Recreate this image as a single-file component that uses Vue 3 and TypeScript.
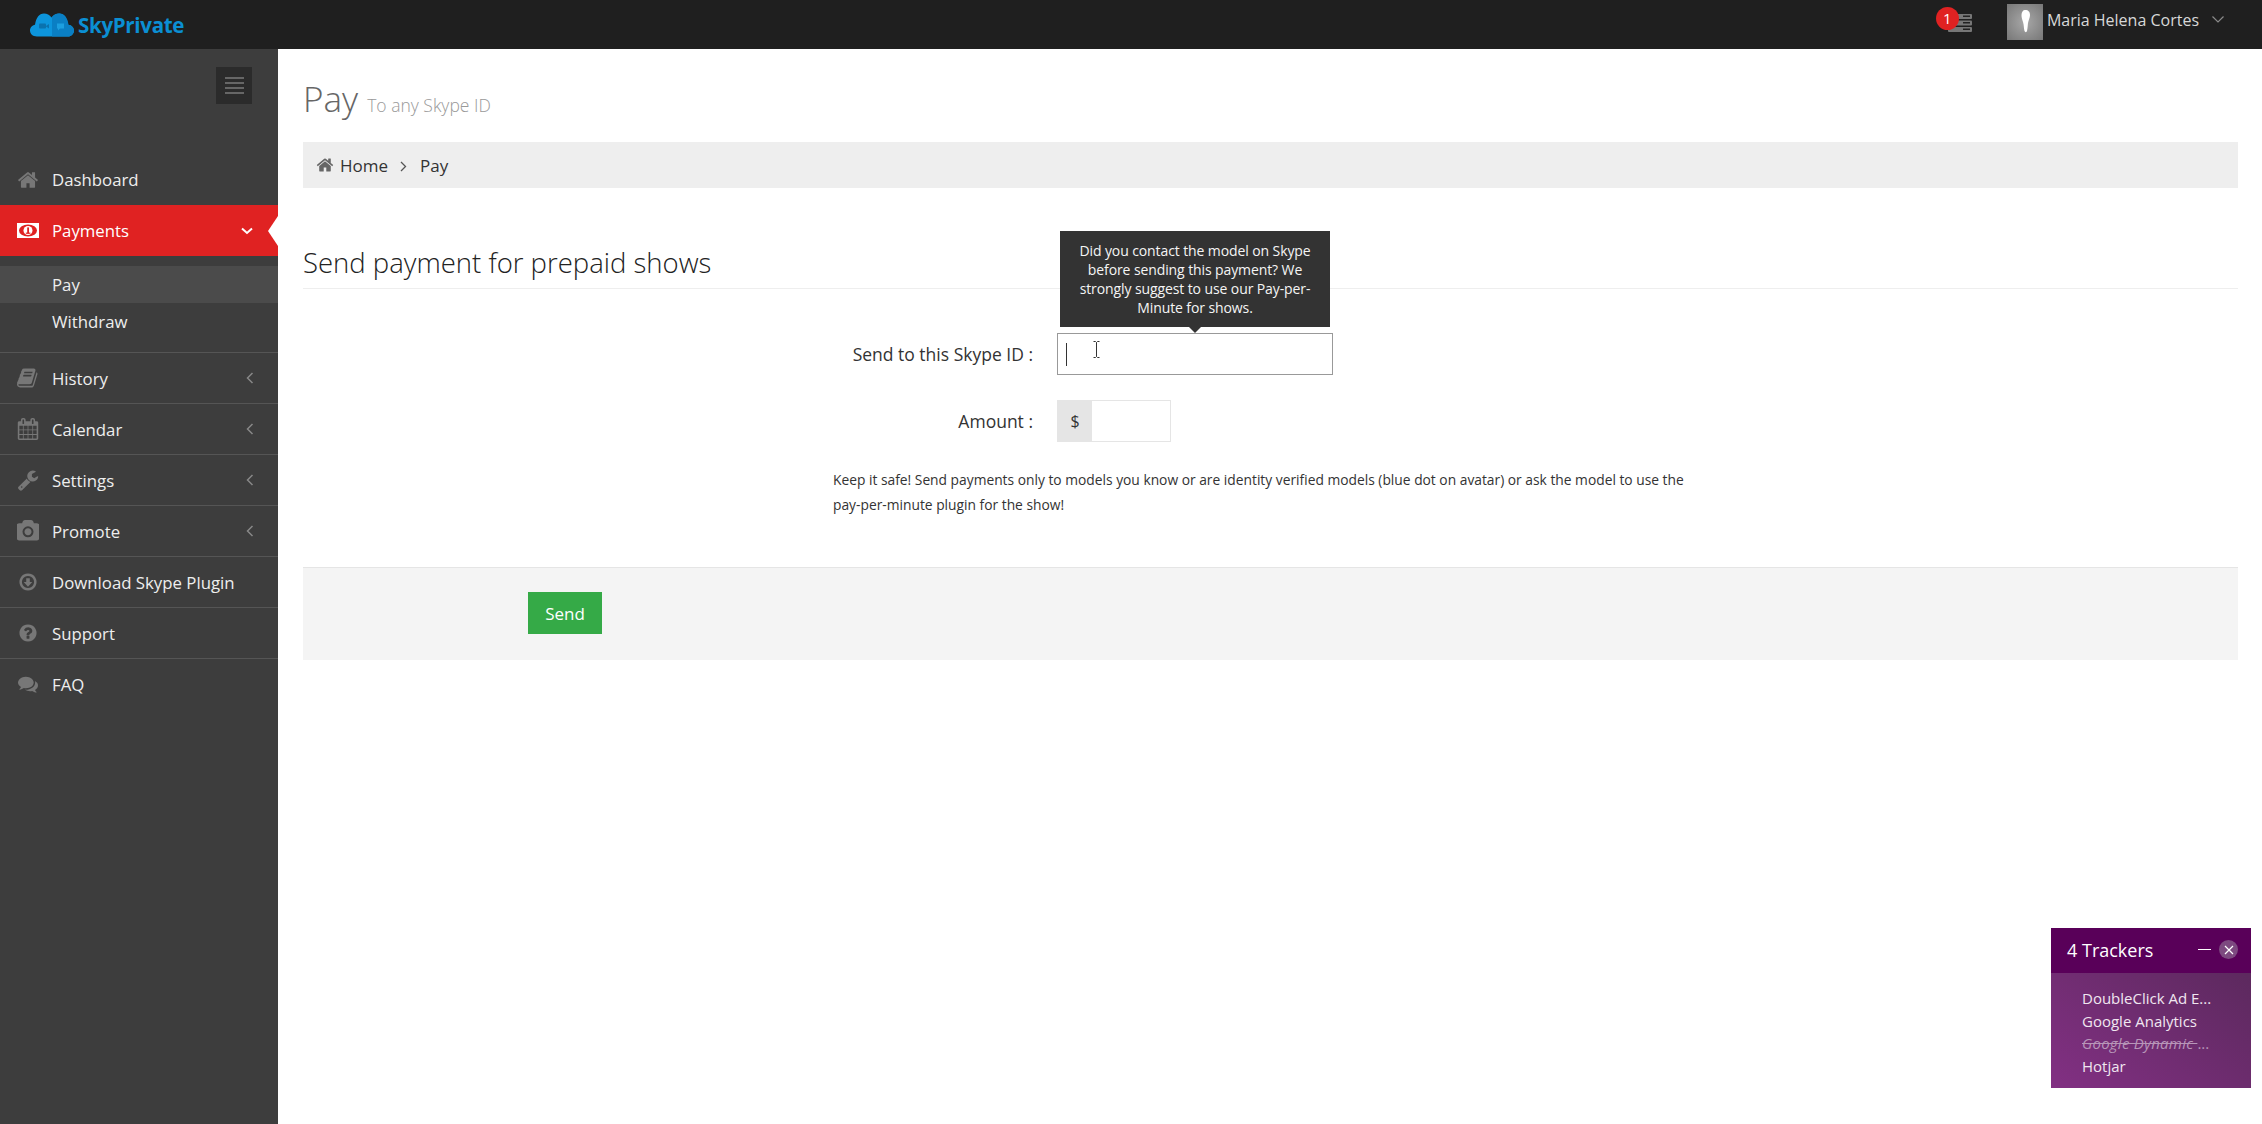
<script setup lang="ts">
interface MenuItem {
  label: string
  icon: string
  arrow?: boolean
  small?: boolean
}

// font-awesome 4 shapes, viewBox 0 0 1792 1792
const icons: Record<string, string> = {
  home: 'M1472 992v480q0 26-19 45t-45 19h-384v-384h-256v384h-384q-26 0-45-19t-19-45v-480q0-1 .5-3t.5-3l575-474 575 474q1 2 1 6zm223-69l-62 74q-8 9-21 11h-3q-13 0-21-7l-692-577-692 577q-12 8-24 7-13-2-21-11l-62-74q-8-10-7-23.5t11-20.5l719-599q32-26 76-26t76 26l244 204v-195q0-14 9-23t23-9h192q14 0 23 9t9 23v408l219 182q10 8 11 21.5t-7 23.5z',
  book: 'M1639 478q40 57 18 129l-275 906q-19 64-76.5 107.5t-122.5 43.5h-923q-77 0-148.5-53.5t-99.5-131.5q-24-67-2-127 0-4 3-27t4-37q1-8-3-21.5t-3-19.5q2-11 8-21t16.5-23.5 16.5-23.5q23-38 45-91.5t30-91.5q3-10 .5-30t-.5-28q3-11 17-28t17-23q21-36 42-92t25-90q1-9-2.5-32t.5-28q4-13 22-30.5t22-22.5q19-26 42.5-84.5t27.5-96.5q1-8-3-25.5t-2-26.5q2-8 9-18t18-23 17-21q8-12 16.5-30.5t15-35 16-36 19.5-32 26.5-23.5 36-11.5 47.5 5.5l-1 3q38-9 51-9h761q74 0 114 56t18 130l-274 906q-36 119-71.5 153.5t-128.5 34.5h-869q-27 0-38 15-11 16-1 43 24 70 144 70h923q29 0 56-15.5t35-41.5l300-987q7-22 5-57 38 15 59 43zm-1064 2q-4 13 2 22.5t20 9.5h608q13 0 25.5-9.5t16.5-22.5l21-64q4-13-2-22.5t-20-9.5h-608q-13 0-25.5 9.5t-16.5 22.5zm-83 256q-4 13 2 22.5t20 9.5h608q13 0 25.5-9.5t16.5-22.5l21-64q4-13-2-22.5t-20-9.5h-608q-13 0-25.5 9.5t-16.5 22.5z',
  calendar: 'M192 1664h288v-288h-288v288zm352 0h320v-288h-320v288zm-352-352h288v-320h-288v320zm352 0h320v-320h-320v320zm-352-384h288v-288h-288v288zm736 736h320v-288h-320v288zm-384-736h320v-288h-320v288zm768 736h288v-288h-288v288zm-384-352h320v-320h-320v320zm-352-864v-288q0-13-9.5-22.5t-22.5-9.5h-64q-13 0-22.5 9.5t-9.5 22.5v288q0 13 9.5 22.5t22.5 9.5h64q13 0 22.5-9.5t9.5-22.5zm736 864h288v-320h-288v320zm-384-384h320v-288h-320v288zm384 0h288v-288h-288v288zm32-480v-288q0-13-9.5-22.5t-22.5-9.5h-64q-13 0-22.5 9.5t-9.5 22.5v288q0 13 9.5 22.5t22.5 9.5h64q13 0 22.5-9.5t9.5-22.5zm384-64v1280q0 52-38 90t-90 38h-1408q-52 0-90-38t-38-90v-1280q0-52 38-90t90-38h128v-96q0-66 47-113t113-47h64q66 0 113 47t47 113v96h384v-96q0-66 47-113t113-47h64q66 0 113 47t47 113v96h128q52 0 90 38t38 90z',
  wrench: 'M448 1472q0-26-19-45t-45-19-45 19-19 45 19 45 45 19 45-19 19-45zm644-420l-682 682q-37 37-90 37-52 0-91-37l-106-108q-38-36-38-90 0-53 38-91l681-681q39 98 114.5 173.5t173.5 114.5zm634-435q0 39-23 106-47 134-164.5 217.5t-258.5 83.5q-185 0-316.5-131.5t-131.5-316.5 131.5-316.5 316.5-131.5q58 0 121.5 16.5t107.5 46.5q16 11 16 28t-16 28l-293 169v224l193 107q5-3 79-48.5t135.5-81 70.5-35.5q15 0 23.5 10t8.500 25z',
  camera: 'M896 672q119 0 203.5 84.5t84.5 203.5-84.5 203.5-203.5 84.5-203.5-84.5-84.5-203.5 84.5-203.5 203.5-84.5zm704-416q106 0 181 75t75 181v896q0 106-75 181t-181 75h-1408q-106 0-181-75t-75-181v-896q0-106 75-181t181-75h224l51-136q19-49 69.5-84.5t103.5-35.5h512q53 0 103.5 35.5t69.5 84.5l51 136h224zm-704 1152q185 0 316.5-131.5t131.5-316.5-131.5-316.5-316.5-131.5-316.5 131.5-131.5 316.5 131.5 316.5 316.5 131.5z',
  download: 'M896 128a768 768 0 1 0 .1 0zm0 224a544 544 0 1 1-.1 0zM736 560v336H512l384 416 384-416h-224V560z',
  question: 'M1024 1376v-192q0-14-9-23t-23-9h-192q-14 0-23 9t-9 23v192q0 14 9 23t23 9h192q14 0 23-9t9-23zm256-672q0-88-55.5-163t-138.5-116-170-41q-243 0-371 213-15 24 8 42l132 100q7 6 19 6 16 0 25-12 53-68 86-92 34-24 86-24 48 0 85.5 26t37.5 59q0 38-20 61t-68 45q-63 28-115.5 86.5t-52.5 125.5v36q0 14 9 23t23 9h192q14 0 23-9t9-23q0-19 21.5-49.5t54.5-49.5q32-18 49-28.5t46-35 44.5-48 28-60.5 12.5-81zm384 192q0 209-103 385.5t-279.5 279.5-385.5 103-385.5-103-279.5-279.5-103-385.5 103-385.5 279.5-279.5 385.5-103 385.5 103 279.5 279.5 103 385.5z',
  comments: 'M1408 768q0 139-94 257t-256.5 186.5-353.5 68.5q-86 0-176-16-124 88-278 128-36 9-86 16h-3q-11 0-20.5-8t-11.5-21q-1-3-1-6.5t.5-6.5 2-6l2.5-5 3.5-5.5 4-5 4.5-5 4-4.5q5-6 23-25t26-29.5 22.5-29 25-38.5 20.5-44q-124-72-195-177t-71-224q0-139 94-257t256.5-186.5 353.5-68.5 353.5 68.5 256.5 186.5 94 257zm384 256q0 120-71 224.5t-195 176.5q10 24 20.5 44t25 38.5 22.5 29 26 29.5 23 25q1 1 4 4.5t4.5 5 4 5 3.5 5.5l2.5 5 2 6 .5 6.5-1 6.5q-3 14-13 22t-22 7q-50-7-86-16-154-40-278-128-90 16-176 16-271 0-472-132 58 4 88 4 161 0 309-45t264-129q125-92 192-212t67-254q0-77-23-152 129 71 204 178t75 230z',
}

const lowerMenu: MenuItem[] = [
  { label: 'History', icon: 'book', arrow: true },
  { label: 'Calendar', icon: 'calendar', arrow: true },
  { label: 'Settings', icon: 'wrench', arrow: true },
  { label: 'Promote', icon: 'camera', arrow: true },
  { label: 'Download Skype Plugin', icon: 'download', small: true },
  { label: 'Support', icon: 'question', small: true },
  { label: 'FAQ', icon: 'comments', small: true },
]

const trackers = [
  { name: 'DoubleClick Ad E...' },
  { name: 'Google Analytics' },
  { name: 'Google Dynamic ', blocked: true },
  { name: 'Hotjar' },
]
</script>

<template>
  <div class="page">
    <header class="topbar">
      <div class="logo">
        <svg class="logo-cloud" viewBox="0 0 44 24" width="44" height="24">
          <path d="M7 23.500C2.500 23.500 0 20.500 0 17.500c0-3 2.200-5.400 5-5.800C6 5 9 .5 14 .5c3 0 5.600 1.500 7.500 4 1.800-2.500 4.500-4 7.500-4 5 0 8 4.500 9 11.200 3.300.3 6 2.800 6 5.800 0 3.300-2.700 6-6 6z" fill="#0d95dc" />
          <path d="M22 4.500c1.800-2.500 4.500-4 7.500-4 5 0 8 4.500 9 11.200 3.300.3 5.500 2.800 5.500 5.800 0 3.300-2.700 6-6 6H22z" fill="#0a7fc4" />
          <rect x="9" y="10.500" width="7" height="5" rx="1" fill="#0a72ae" />
          <path d="M16 13l3-2v4.500l-3-2z" fill="#0a72ae" />
          <path d="M27 10.500h7v5h-4l-2 2v-2h-1z" fill="#1c9fe0" />
        </svg>
        <span class="logo-text">SkyPrivate</span>
      </div>
      <div class="top-right">
        <div class="notif">
          <svg class="notif-stack" viewBox="0 0 24 18" width="24" height="18">
            <rect x="0" y="0" width="24" height="5" rx="1" fill="#777" />
            <rect x="0" y="6.500" width="24" height="5" rx="1" fill="#777" />
            <rect x="0" y="13" width="24" height="5" rx="1" fill="#777" />
            <rect x="15" y="1.500" width="7" height="1.500" fill="#222" />
            <rect x="15" y="8" width="7" height="1.500" fill="#222" />
            <rect x="15" y="14.500" width="7" height="1.500" fill="#222" />
          </svg>
          <span class="badge">1</span>
        </div>
        <div class="avatar">
          <svg viewBox="0 0 36 36" width="36" height="36">
            <path d="M18 6c3.500 0 5 2 5 5 0 3-1.500 5-2 8-.3 2-.3 5-1 8-.3 1.500-2 1.500-2.500 0-.8-3-.5-6-1.500-9-1-3-1.500-4.500-1.500-7 0-3 1.500-5 3.500-5z" fill="#fff" />
          </svg>
        </div>
        <span class="user-name">Maria Helena Cortes</span>
        <svg class="user-caret" viewBox="0 0 12 7" width="12" height="7">
          <path d="M.5.5 6 6l5.500-5.500" fill="none" stroke="#8a8a8a" stroke-width="1.200" />
        </svg>
      </div>
    </header>

    <div class="body">
      <aside class="sidebar">
        <div class="toggle-row">
          <div class="toggle">
            <i /><i /><i /><i />
          </div>
        </div>

        <a class="item">
          <svg class="icon" viewBox="0 0 1792 1792"><path :d="icons.home" /></svg>
          <span>Dashboard</span>
        </a>

        <a class="item active">
          <svg class="icon money" viewBox="0 0 22 15">
            <rect width="22" height="15" fill="#fff" />
            <ellipse cx="11" cy="7.500" rx="9" ry="6" fill="#e02222" />
            <circle cx="11" cy="7.500" r="4.500" fill="#fff" />
            <rect x="10.200" y="4.400" width="1.800" height="6" fill="#e02222" />
            <rect x="8.800" y="9.600" width="4.600" height="1.200" fill="#e02222" />
          </svg>
          <span>Payments</span>
          <svg class="arrow" viewBox="0 0 12 8" width="12" height="8">
            <path d="M1 1.500 6 6l5-4.500" fill="none" stroke="#fff" stroke-width="2" />
          </svg>
          <b class="notch" />
        </a>

        <div class="submenu">
          <a class="sub current">Pay</a>
          <a class="sub">Withdraw</a>
        </div>

        <a v-for="m in lowerMenu" :key="m.label" class="item bordered">
          <svg class="icon" :class="{ small: m.small }" viewBox="0 0 1792 1792"><path :d="icons[m.icon]" /></svg>
          <span>{{ m.label }}</span>
          <svg v-if="m.arrow" class="arrow" viewBox="0 0 8 12" width="8" height="12">
            <path d="M6.500 1 1.500 6l5 5" fill="none" stroke="#888" stroke-width="1.500" />
          </svg>
        </a>
      </aside>

      <main class="main">
        <h1 class="title">Pay <small>To any Skype ID</small></h1>

        <div class="crumbs">
          <svg class="crumb-home" viewBox="0 0 1792 1792"><path :d="icons.home" /></svg>
          <span>Home</span>
          <svg class="crumb-sep" viewBox="0 0 7 11" width="7" height="11">
            <path d="M1 1l4.500 4.500L1 10" fill="none" stroke="#555" stroke-width="1.300" />
          </svg>
          <span>Pay</span>
        </div>

        <h2 class="section">Send payment for prepaid shows</h2>

        <form class="form" @submit.prevent>
          <div class="field">
            <label class="field-label">Send to this Skype ID :</label>
            <div class="control">
              <div class="tooltip">
                Did you contact the model on Skype before sending this payment? We strongly suggest to use our Pay-per-Minute for shows.
              </div>
              <input class="text-input" type="text" />
              <span class="caret" />
              <svg class="ibeam" viewBox="0 0 7 17" width="7" height="17">
                <path d="M.5.500h2l1 1 1-1h2M3.500 1.500v14M.5 16.500h2l1-1 1 1h2" fill="none" stroke="#333" stroke-width="1" />
              </svg>
            </div>
          </div>

          <div class="field amount">
            <label class="field-label">Amount :</label>
            <div class="input-group">
              <span class="addon">$</span>
              <input class="amount-input" type="text" />
            </div>
          </div>

          <p class="note">
            Keep it safe! Send payments only to models you know or are identity verified models (blue dot on avatar) or ask the model to use the pay-per-minute plugin for the show!
          </p>

          <div class="actions">
            <button class="send" type="submit">Send</button>
          </div>
        </form>
      </main>
    </div>

    <section class="trackers">
      <div class="trackers-head">
        <span class="trackers-title">4 Trackers</span>
        <span class="minimize" />
        <span class="close">
          <svg viewBox="0 0 10 10" width="10" height="10">
            <path d="M1 1l8 8M9 1l-8 8" stroke="#fff" stroke-width="1.200" />
          </svg>
        </span>
      </div>
      <ul class="trackers-list">
        <li v-for="t in trackers" :key="t.name">
          <template v-if="t.blocked"><s>{{ t.name }}</s><span class="dim">...</span></template>
          <template v-else>{{ t.name }}</template>
        </li>
      </ul>
    </section>
  </div>
</template>

<style>
html,
body {
  margin: 0;
  overflow: hidden;
}
</style>

<style scoped>
.page {
  height: 100vh;
  display: flex;
  flex-direction: column;
  font-family: "Open Sans", "Liberation Sans", sans-serif;
  color: #333;
  background: #fff;
}

.topbar {
  height: 49px;
  flex: none;
  display: flex;
  align-items: center;
  justify-content: space-between;
  background: #1f1f1f;
}

.logo {
  display: flex;
  align-items: center;
  padding-left: 30px;
}

.logo-cloud {
  margin-right: 4px;
}

.logo-text {
  font-size: 20.500px;
  font-weight: 700;
  letter-spacing: -0.3px;
  color: #0b8fd3;
}

.top-right {
  display: flex;
  align-items: center;
  padding-right: 38px;
}

.notif {
  position: relative;
  width: 24px;
  height: 18px;
  margin: 0 35px 3px 0;
}

.notif-stack {
  display: block;
}

.badge {
  position: absolute;
  left: -12px;
  top: -7px;
  width: 23px;
  height: 23px;
  border-radius: 50%;
  background: #e02222;
  color: #fff;
  font-size: 15px;
  line-height: 23px;
  text-align: center;
}

.avatar {
  width: 36px;
  height: 36px;
  margin: 0 4px 5px 0;
  background: radial-gradient(circle at 50% 50%, #a8a8a8, #777);
}

.avatar svg {
  display: block;
}

.user-name {
  font-size: 16px;
  color: #d8d8d8;
  margin-right: 13px;
  margin-bottom: 10px;
}

.user-caret {
  margin-bottom: 10px;
}

.body {
  flex: 1;
  display: flex;
  min-height: 0;
}

.sidebar {
  width: 278px;
  flex: none;
  background: #3d3d3d;
  color: #eee;
}

.toggle-row {
  height: 105px;
  box-sizing: border-box;
  padding: 18px 26px 0 0;
  display: flex;
  justify-content: flex-end;
}

.toggle {
  width: 36px;
  height: 37px;
  background: #2b2b2b;
  display: flex;
  flex-direction: column;
  align-items: center;
  justify-content: center;
  gap: 3px;
}

.toggle i {
  display: block;
  width: 19px;
  height: 2px;
  background: #666;
}

.item {
  position: relative;
  height: 51px;
  box-sizing: border-box;
  display: flex;
  align-items: center;
  padding: 0 24px 0 17px;
  font-size: 16.800px;
}

.item span {
  flex: 1;
}

.item.bordered {
  border-top: 1px solid #555;
}

.icon {
  width: 22px;
  height: 22px;
  margin-right: 13px;
  fill: #777;
  flex: none;
}

.icon.small {
  width: 20px;
  height: 20px;
  margin: 0 14px 0 1px;
}

.icon.money {
  height: 15px;
}

.item.active {
  background: #e02222;
  color: #fff;
}

.notch {
  position: absolute;
  right: 0;
  top: 11px;
  border-style: solid;
  border-width: 15px 10px 15px 0;
  border-color: transparent #fff transparent transparent;
}

.arrow {
  flex: none;
}

.item.active .arrow {
  margin-right: 1px;
}

.submenu {
  padding: 10px 0 11px;
  height: 75px;
  box-sizing: content-box;
}

.sub {
  display: flex;
  align-items: center;
  height: 37px;
  padding-left: 52px;
  font-size: 16.800px;
  color: #eee;
}

.sub.current {
  background: #4b4b4b;
}

.main {
  flex: 1;
  min-width: 0;
  padding: 0 24px 0 25px;
}

.title {
  margin: 0;
  height: 93px;
  box-sizing: border-box;
  padding-top: 27px;
  font-size: 35px;
  font-weight: 300;
  line-height: 45px;
  color: #666;
}

.title small {
  font-size: 17.500px;
  font-weight: 300;
  color: #999;
}

.crumbs {
  height: 46px;
  display: flex;
  align-items: center;
  padding-left: 13px;
  background: #eee;
  font-size: 17px;
  color: #333;
}

.crumb-home {
  width: 18px;
  height: 18px;
  fill: #666;
  margin-right: 6px;
}

.crumb-sep {
  margin: 2px 13px 0 12px;
}

.section {
  margin: 0;
  height: 101px;
  box-sizing: border-box;
  padding-top: 58px;
  font-size: 27.500px;
  font-weight: 300;
  line-height: 34px;
  color: #222;
  border-bottom: 1px solid #eee;
}

.form {
  padding-top: 44px;
}

.field {
  display: flex;
  align-items: center;
}

.field.amount {
  margin-top: 25px;
}

.field-label {
  width: 730px;
  flex: none;
  margin-right: 24px;
  text-align: right;
  font-size: 17.500px;
  color: #333;
}

.control {
  position: relative;
  width: 276px;
  height: 42px;
}

.text-input {
  width: 100%;
  height: 100%;
  box-sizing: border-box;
  border: 1px solid #999;
  outline: none;
  padding: 0 10px;
  font: inherit;
}

.caret {
  position: absolute;
  left: 9px;
  top: 10px;
  width: 1px;
  height: 23px;
  background: #333;
}

.ibeam {
  position: absolute;
  left: 36px;
  top: 8px;
}

.tooltip {
  position: absolute;
  left: 3px;
  bottom: calc(100% + 6px);
  width: 270px;
  height: 96px;
  box-sizing: border-box;
  padding: 10px 16px;
  background: #333;
  color: #f5f5f5;
  font-size: 14px;
  line-height: 19px;
  letter-spacing: -0.1px;
  text-align: center;
}

.tooltip::after {
  content: "";
  position: absolute;
  left: 50%;
  top: 100%;
  margin-left: -6px;
  border-style: solid;
  border-width: 6px 6px 0;
  border-color: #333 transparent transparent;
}

.input-group {
  display: flex;
  height: 42px;
  width: 114px;
  box-sizing: border-box;
  border: 1px solid #e5e5e5;
}

.addon {
  width: 34px;
  flex: none;
  background: #e5e5e5;
  display: flex;
  align-items: center;
  justify-content: center;
  font-size: 16px;
}

.amount-input {
  flex: 1;
  min-width: 0;
  border: 0;
  outline: none;
  padding: 0;
}

.note {
  margin: 25px 0 0 530px;
  width: 860px;
  font-size: 13.800px;
  line-height: 25px;
  color: #333;
}

.actions {
  margin-top: 50px;
  height: 93px;
  box-sizing: border-box;
  border-top: 1px solid #e5e5e5;
  background: #f4f4f4;
  padding: 24px 0 0 225px;
}

.send {
  display: block;
  width: 74px;
  height: 42px;
  border: 0;
  background: #35aa47;
  color: #fff;
  font: inherit;
  font-size: 17px;
}

.trackers {
  position: fixed;
  left: 2051px;
  top: 928px;
  width: 200px;
  height: 160px;
  color: #fff;
  background: linear-gradient(to top right, #823083, #562858);
}

.trackers-head {
  height: 45px;
  box-sizing: border-box;
  padding: 0 13px 2px 16px;
  display: flex;
  align-items: center;
  background: #590059;
}

.trackers-title {
  flex: 1;
  font-size: 18px;
}

.minimize {
  width: 13px;
  height: 1px;
  background: #fff;
  margin-right: 8px;
}

.close {
  width: 19px;
  height: 19px;
  border-radius: 50%;
  background: #7d4a80;
  display: flex;
  align-items: center;
  justify-content: center;
}

.trackers-list {
  list-style: none;
  margin: 0;
  padding: 14px 0 0 31px;
  font-size: 15px;
  line-height: 22.500px;
  color: #f0e6f0;
}

.trackers-list s {
  font-style: italic;
  letter-spacing: 0.25px;
  color: #b795b8;
}

.dim {
  color: #b795b8;
}
</style>
